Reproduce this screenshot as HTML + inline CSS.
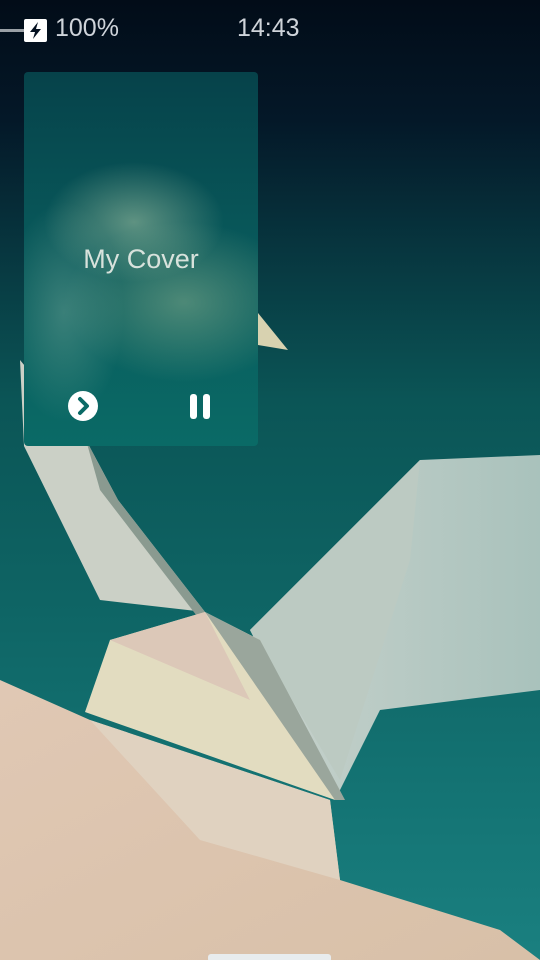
<!DOCTYPE html>
<html><head><style>
html,body{margin:0;padding:0;width:540px;height:960px;overflow:hidden}
body{position:relative;font-family:"Liberation Sans",sans-serif;
background:linear-gradient(180deg,#020c18 0px,#041828 120px,#07363f 250px,#0b5556 400px,#0e6464 600px,#147474 800px,#1a8080 960px);}
svg.bg{position:absolute;left:0;top:0}
.status{position:absolute;top:14px;color:#cfd4da;font-size:25px}
.card{position:absolute;left:24px;top:72px;width:234px;height:374px;border-radius:4px;overflow:hidden;
background:radial-gradient(ellipse 90px 60px at 110px 150px,rgba(200,220,180,.45),rgba(0,0,0,0) 100%),
radial-gradient(ellipse 120px 80px at 160px 230px,rgba(160,190,150,.45),rgba(0,0,0,0) 100%),
radial-gradient(ellipse 60px 110px at 40px 240px,rgba(150,190,170,.35),rgba(0,0,0,0) 100%),
linear-gradient(180deg,#06424a 0%,#08585a 45%,#0a6a66 100%);}
.title{position:absolute;left:0;right:0;top:172px;text-align:center;color:#d8e2dc;font-size:27px}
</style></head><body>
<svg class="bg" width="540" height="960">
<defs>
<linearGradient id="w" x1="0" y1="0" x2="1" y2="0"><stop offset="0" stop-color="#c8d2cc"/><stop offset="1" stop-color="#a9c2bc"/></linearGradient>
<linearGradient id="b" x1="0" y1="0" x2="1" y2="1"><stop offset="0" stop-color="#e0c8b4"/><stop offset="1" stop-color="#d8c0a8"/></linearGradient>
</defs>
<polygon points="258,313 288,350 258,345" fill="#d8d2b0"/>
<polygon points="20,360 24,446 100,600 205,612 118,500 86,440" fill="#cbd0c6"/>
<polygon points="86,440 118,500 205,612 200,620 100,490" fill="#8a9a90"/>
<polygon points="250,630 420,460 540,455 540,690 380,710 335,800" fill="url(#w)"/>
<polygon points="250,630 420,460 410,560 340,780" fill="#bccac2"/>
<polygon points="110,640 85,712 335,800 260,640 205,612" fill="#e2dcc0"/>
<polygon points="205,612 260,640 345,800 335,800" fill="#9aa69c"/>
<polygon points="110,640 205,612 250,700" fill="#dcc8b8"/>
<polygon points="0,680 0,960 540,960 500,930 340,880 330,800 90,720" fill="url(#b)"/>
<polygon points="90,720 330,800 340,880 200,840" fill="#e0d2c0"/>
<rect x="0" y="29" width="24" height="3" fill="#9aa0a6"/>
<rect x="208" y="954" width="123" height="8" rx="3" fill="#e8ecee"/>
</svg>
<div style="position:absolute;left:24px;top:19px;width:23px;height:23px;background:#fff;border-radius:2px"></div>
<svg style="position:absolute;left:24px;top:19px" width="23" height="23"><polygon points="14,3 6,13 11,13 9,20 17,10 12,10" fill="#041020"/></svg>
<div class="status" style="left:55px">100%</div>
<div class="status" style="left:237px">14:43</div>
<div class="card">
<div class="title">My Cover</div>
<svg style="position:absolute;left:43px;top:318px" width="32" height="32"><circle cx="16" cy="16" r="15" fill="#fff"/><polyline points="13,9 20,16 13,23" fill="none" stroke="#0a6a66" stroke-width="4" stroke-linecap="round" stroke-linejoin="round"/></svg>
<div style="position:absolute;left:166px;top:322px;width:7px;height:25px;background:#fff;border-radius:3px"></div>
<div style="position:absolute;left:179px;top:322px;width:7px;height:25px;background:#fff;border-radius:3px"></div>
</div>
</body></html>
